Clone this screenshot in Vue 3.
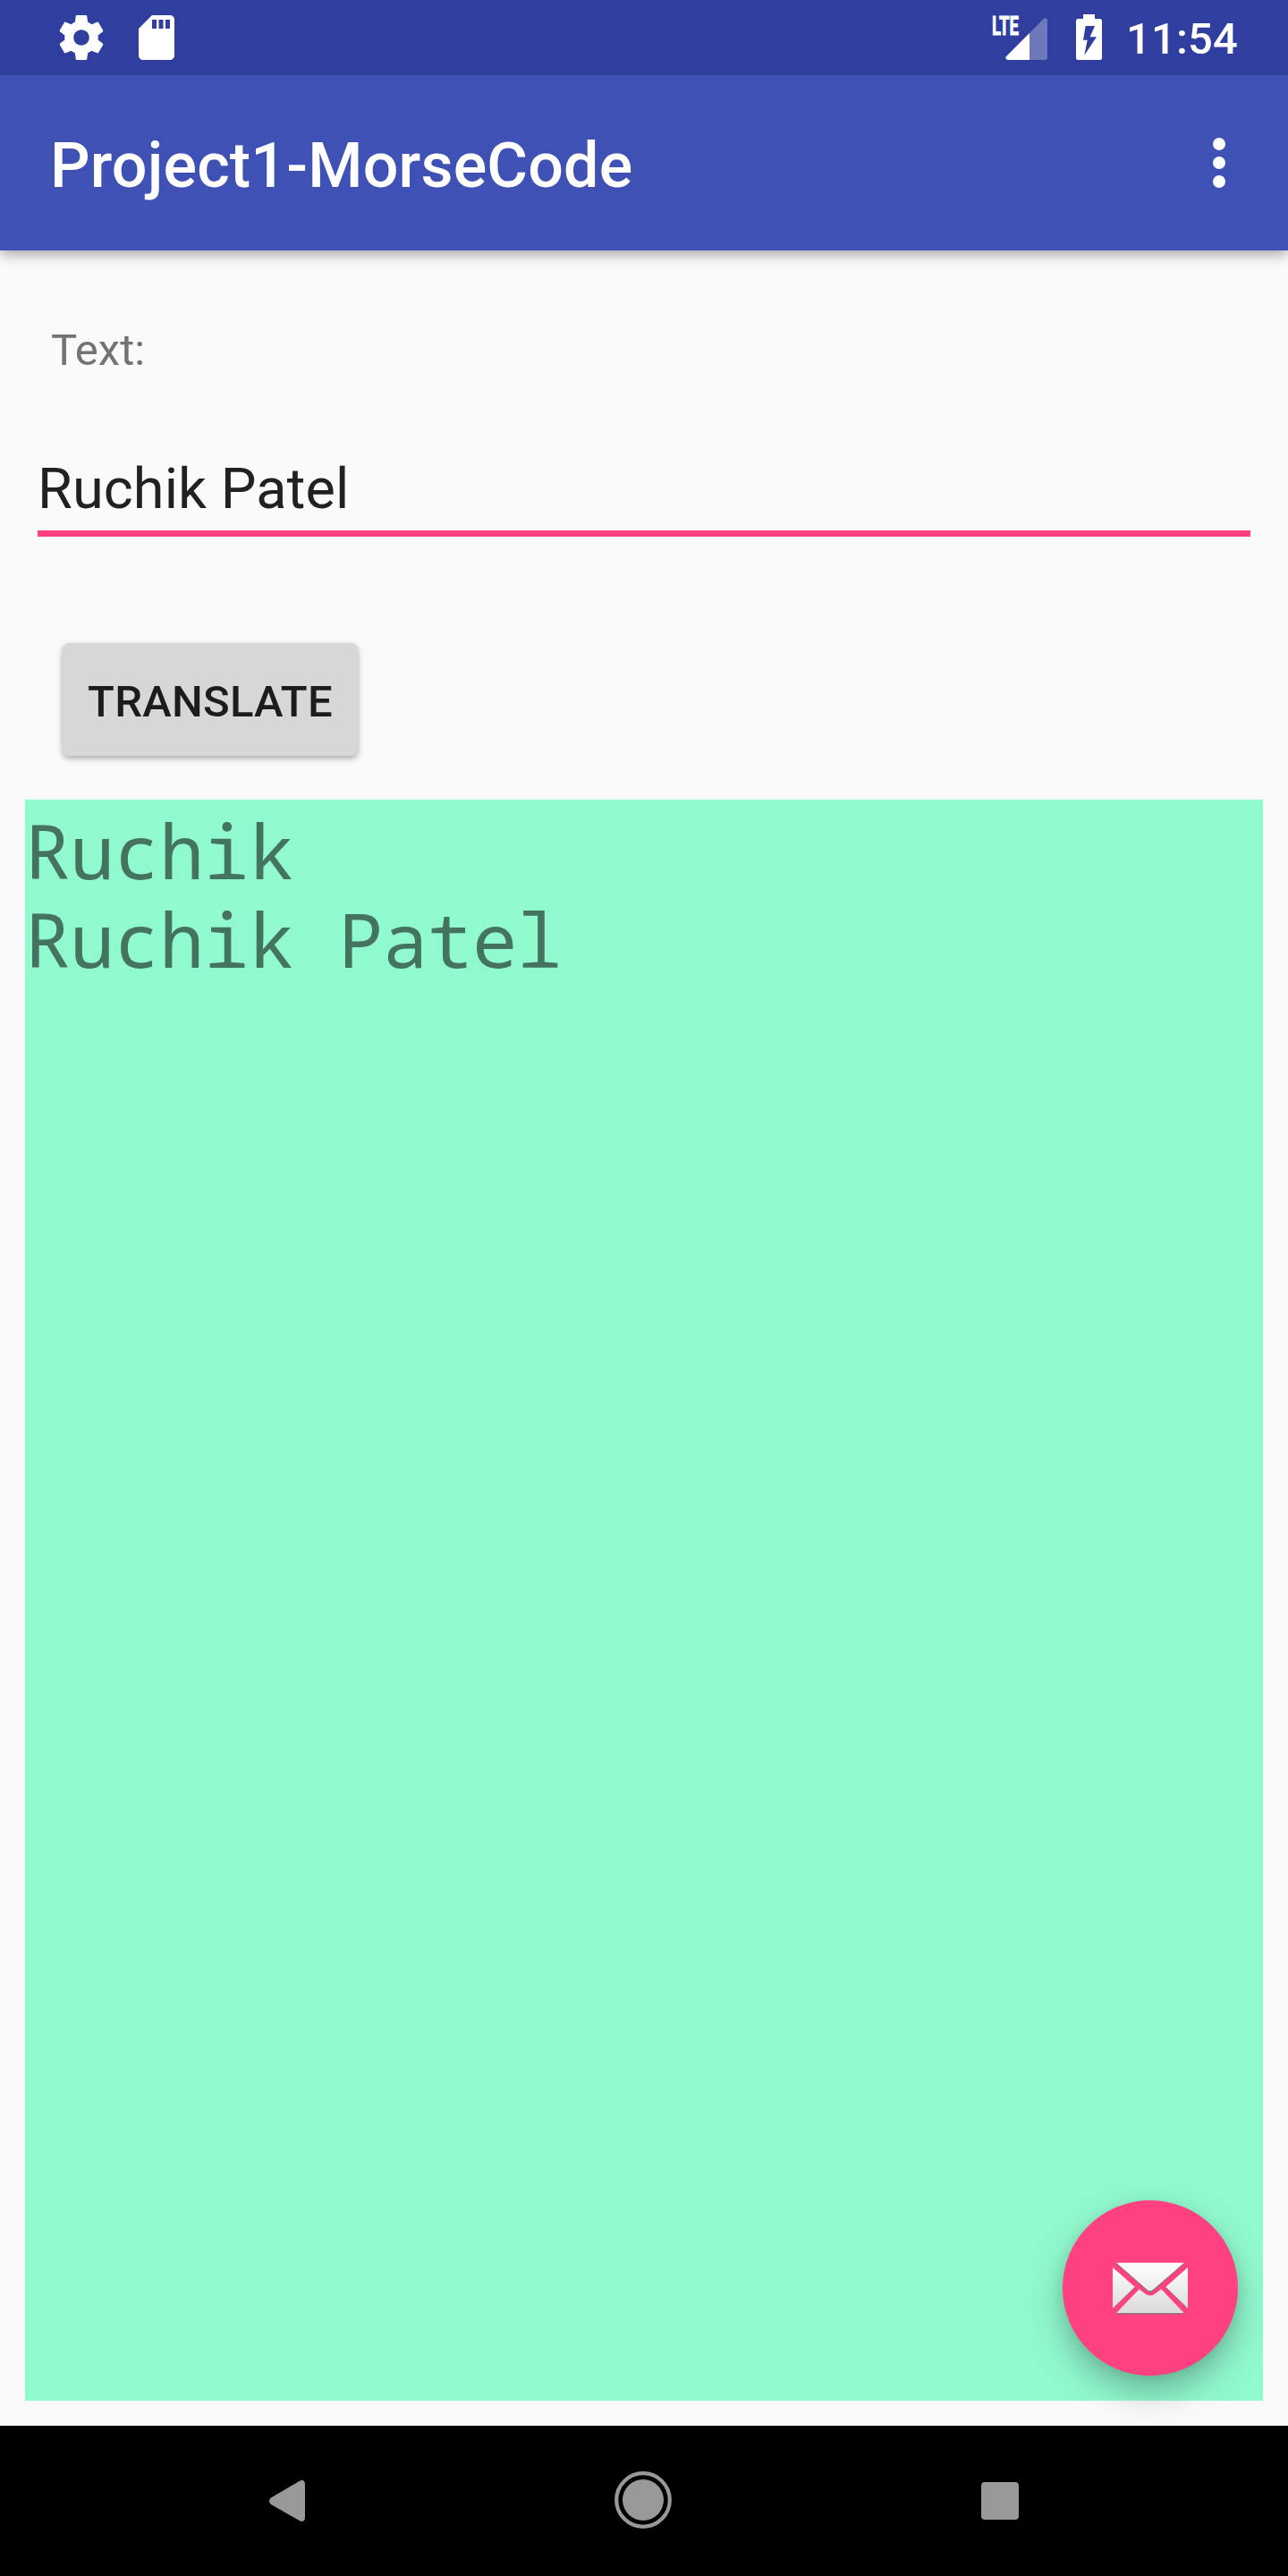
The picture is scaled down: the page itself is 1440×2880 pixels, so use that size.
<script setup>
import { ref } from 'vue'

const text = ref('Ruchik Patel')
const lines = ref(['Ruchik', 'Ruchik Patel'])
</script>

<template>
  <div class="screen">
    <header class="status">
      <svg class="s-icon" viewBox="0 0 24 24">
        <path d="M19.43 12.98c.04-.32.07-.64.07-.98s-.03-.66-.07-.98l2.11-1.65c.19-.15.24-.42.12-.64l-2-3.46c-.12-.22-.39-.3-.61-.22l-2.49 1c-.52-.4-1.08-.73-1.69-.98l-.38-2.65C14.46 2.18 14.25 2 14 2h-4c-.25 0-.46.18-.49.42l-.38 2.65c-.61.25-1.17.59-1.69.98l-2.49-1c-.23-.09-.49 0-.61.22l-2 3.46c-.13.22-.07.49.12.64l2.11 1.65c-.04.32-.07.65-.07.98s.03.66.07.98l-2.11 1.65c-.19.15-.24.42-.12.64l2 3.46c.12.22.39.3.61.22l2.49-1c.52.4 1.08.73 1.69.98l.38 2.65c.03.24.24.42.49.42h4c.25 0 .46-.18.49-.42l.38-2.65c.61-.25 1.17-.59 1.69-.98l2.49 1c.23.09.49 0 .61-.22l2-3.46c.12-.22.07-.49-.12-.64l-2.11-1.65zM12 15.5c-1.93 0-3.5-1.57-3.5-3.5s1.57-3.5 3.5-3.5 3.5 1.57 3.5 3.5-1.57 3.5-3.5 3.5z" />
      </svg>
      <svg class="s-icon sd" viewBox="0 0 24 24">
        <path fill-rule="evenodd" d="M18 2h-8L4 8v12c0 1.1.9 2 2 2h12c1.1 0 2-.9 2-2V4c0-1.1-.9-2-2-2zM12 8h-2V4h2zm3 0h-2V4h2zm3 0h-2V4h2z" />
      </svg>
      <div class="signal">
        <span class="lte">LTE</span>
        <svg viewBox="0 0 47 47">
          <path fill-opacity=".3" d="M27 17 42.500 1.300Q47-1.500 47 3.500V44.500Q47 47 44.500 47H27z" />
          <path d="M27 17V47H2.500Q-.8 46 .8 43.200z" />
        </svg>
      </div>
      <svg class="battery" viewBox="0 0 29 51">
        <path fill-rule="evenodd" d="M8 0H21V5H26.500Q29 5 29 8V48.500Q29 51 26.500 51H2.500Q0 51 0 48.500V8Q0 5 2.500 5H8zM10.700 13 8 28.700H12.700L9.300 45.700 23 25.300H15.700L21 13z" />
      </svg>
      <span class="time">11:54</span>
    </header>

    <div class="appbar">
      <h1>Project1-MorseCode</h1>
      <svg class="more" viewBox="0 0 14 56">
        <circle cx="7" cy="7" r="7" /><circle cx="7" cy="28" r="7" /><circle cx="7" cy="49" r="7" />
      </svg>
    </div>

    <main>
      <div class="label">Text:</div>
      <div class="field">{{ text }}</div>
      <button class="translate">TRANSLATE</button>
      <div class="output">
        <div v-for="(line, i) in lines" :key="i">{{ line }}</div>
      </div>
      <div class="fab">
        <svg viewBox="252 298 252 176">
          <defs>
            <linearGradient id="paper" gradientUnits="userSpaceOnUse" x1="0" y1="325" x2="0" y2="472">
              <stop offset="0" stop-color="#fafafa" />
              <stop offset="1" stop-color="#d9d9d9" />
            </linearGradient>
          </defs>
          <g fill="#8b6f78" transform="translate(0 3)">
            <path d="M264 300H492L387 393Q378 400 368 393z" />
            <path d="M252 316 326 381 252 453z" />
            <path d="M504 316 430 381 504 453z" />
            <path d="M264 470 341 389 362 405Q378 416 393 405L415 389 491 470z" />
          </g>
          <g fill="url(#paper)">
            <path d="M264 300H492L387 391Q378 398 368 391z" />
            <path d="M252 316 326 381 252 453z" />
            <path d="M504 316 430 381 504 453z" />
            <path d="M264 469 341 389 362 405Q378 416 393 405L415 389 491 469z" />
          </g>
        </svg>
      </div>
    </main>

    <nav>
      <svg class="back" viewBox="0 0 40 46">
        <path d="M33.500 1Q40-2 40 5V41Q40 48 33.500 45L2 27Q-2 23 2 19.500z" />
      </svg>
      <svg class="home" viewBox="0 0 64 64">
        <circle cx="32" cy="32" r="29.800" fill="none" stroke="#999" stroke-width="4.200" />
        <circle cx="32" cy="32" r="23" />
      </svg>
      <div class="recent"></div>
    </nav>
  </div>
</template>

<style>
body { margin: 0; }
</style>

<style scoped>
.screen {
  width: 1440px;
  height: 2880px;
  display: flex;
  flex-direction: column;
  background: #fafafa;
  font-family: Roboto, sans-serif;
  overflow: hidden;
}
svg { display: block; fill: #fff; flex: none; }
.status {
  position: relative;
  z-index: 1;
  height: 84px;
  display: flex;
  align-items: flex-start;
  background: #303f9f;
  color: #fff;
  padding-left: 61px;
  box-sizing: border-box;
}
.s-icon { width: 60px; height: 60px; margin-top: 12px; }
.sd { margin-left: 24px; }
.signal {
  display: flex;
  margin-left: 904px;
  width: 62px;
  padding-top: 20px;
}
.lte {
  width: 15px;
  font: 700 30px/30px Roboto, sans-serif;
  -webkit-text-stroke: .8px #fff;
  margin-top: -6px;
  white-space: nowrap;
  transform: scaleX(.62);
  transform-origin: 0 0;
}
.signal svg { width: 47px; height: 47px; }
.battery { width: 29px; height: 51px; margin: 16px 0 0 32px; }
.time { font-size: 49px; font-weight: 500; line-height: 88px; margin-left: 27px; letter-spacing: .15px; }
.appbar {
  height: 196px;
  display: flex;
  align-items: center;
  justify-content: space-between;
  padding: 0 70px 0 56px;
  background: #3f51b5;
  color: #fff;
  box-shadow: 0 4px 14px rgba(0, 0, 0, .36);
}
h1 { margin: 6px 0 0; font-size: 70px; font-weight: 500; line-height: 84px; letter-spacing: .17px; }
.more { width: 14px; height: 56px; }
main {
  position: relative;
  flex: 1;
  display: flex;
  flex-direction: column;
  align-items: flex-start;
  padding: 82px 28px 28px;
}
.label { font-size: 49px; line-height: 60px; color: #737373; margin-left: 29px; }
.field {
  width: 1356px;
  height: 86px;
  margin: 85px 0 0 14px;
  border-bottom: 7px solid #ff4081;
  font-size: 63px;
  line-height: 80px;
  letter-spacing: .1px;
  color: #212121;
}
.translate {
  width: 330px;
  height: 126px;
  margin: 119px 0 49px 42px;
  padding: 5px 0 0;
  border: 0;
  border-radius: 7px;
  background: #d6d8d7;
  color: #1c1c1c;
  font: 500 49px/60px Roboto, sans-serif;
  letter-spacing: .25px;
  white-space: nowrap;
  box-shadow: 0 3px 7px rgba(0, 0, 0, .32);
}
.output {
  width: 1384px;
  flex: 1;
  background: #91f9ce;
  color: #44735f;
  font: 84px/99px "Droid Sans Mono", "Noto Sans Mono", "Noto Mono", "DejaVu Sans Mono", monospace;
  letter-spacing: -.4px;
  white-space: pre;
  padding-top: 7px;
  box-sizing: border-box;
}
.fab {
  position: absolute;
  right: 56px;
  bottom: 56px;
  width: 196px;
  height: 196px;
  border-radius: 50%;
  background: #ff4081;
  display: flex;
  align-items: center;
  justify-content: center;
  box-shadow: 0 18px 36px rgba(0, 0, 0, .26), 0 2px 14px rgba(0, 0, 0, .08);
}
.fab svg { width: 84px; height: 58.67px; margin-top: 1px; overflow: visible; }
nav {
  position: relative;
  height: 168px;
  display: flex;
  align-items: center;
  background: #000;
}
nav svg { fill: #999; }
.back { width: 40px; height: 46px; margin-left: 301px; }
.home { width: 64px; height: 64px; margin: -2px 0 0 346px; }
.recent { width: 42px; height: 42px; margin-left: 346px; border-radius: 4px; background: #999; }
</style>
